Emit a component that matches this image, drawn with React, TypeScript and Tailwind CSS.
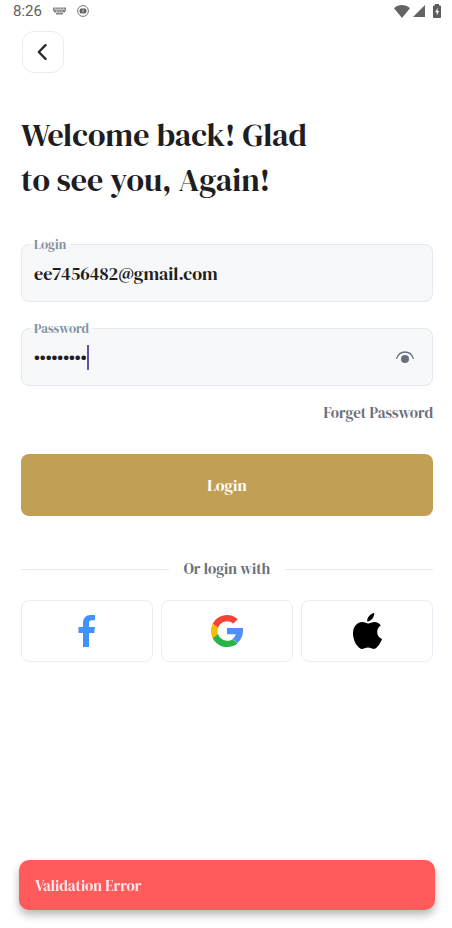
import { useState } from "react";
import type { ReactNode } from "react";

function KeyboardIcon() {
  return (
    <svg viewBox="0 0 13 8" className="h-2 w-[13px]" fill="#858585" aria-hidden="true">
      <path d="M0 .5h13v3.800h-1v1.200H1V4.300H0zM3 6h7v1.500H3z" />
      <path d="M2.300.5v1.500M4.900.5v1.500M7.600.5v1.500M10.300.5v1.500M3.500 3v2.500M6.300 3v2.500M9 3v2.500M1 2.500h11" stroke="#fff" strokeWidth=".5" />
    </svg>
  );
}

function RecordIcon() {
  return (
    <svg viewBox="0 0 12 12" className="size-3" fill="none" aria-hidden="true">
      <circle cx="6" cy="6" r="5.4" stroke="#777" strokeWidth="1" />
      <rect x="2.6" y="3.6" width="6.8" height="4.8" rx="1.6" fill="#5f5f5f" />
      <path d="M6 4.6v2.8" stroke="#ddd" strokeWidth="1" />
    </svg>
  );
}

function StatusBar() {
  return (
    <div className="flex h-[22px] items-center justify-between pr-[11px] pl-[13px] text-[#5f5f5f]">
      <div className="flex items-center">
        <span className="w-10 font-[Roboto,sans-serif] text-[15px] leading-[22px]">8:26</span>
        <KeyboardIcon />
        <span className="w-[11px]" />
        <RecordIcon />
      </div>
      <div className="flex h-5 items-center">
        <svg viewBox="0 0 16 13" className="h-[13px] w-4" fill="#646464" aria-hidden="true">
          <path d="M0 3.2C4.6-1 11.400-1 16 3.200L8 13z" />
        </svg>
        <span className="w-[3px]" />
        <svg viewBox="0 0 12 12" className="size-3" fill="#646464" aria-hidden="true">
          <path d="M12 0v12H0z" />
        </svg>
        <span className="w-2" />
        <svg viewBox="0 0 8 14" className="h-[14px] w-2" aria-hidden="true">
          <path fill="#5c5c5c" d="M2 0h4v1.500h1a1 1 0 0 1 1 1V13a1 1 0 0 1-1 1H1a1 1 0 0 1-1-1V2.500a1 1 0 0 1 1-1h1z" />
          <path fill="#fff" d="M4.600 3.800 2.200 8.200h1.600v3.200l2.300-4.500H4.600z" />
        </svg>
      </div>
    </div>
  );
}

function EyeIcon() {
  return (
    <svg viewBox="0 0 20 14" className="h-[14px] w-5" fill="none" aria-hidden="true">
      <path d="M1.500 8.800C3 4.300 6 2 10 2s7 2.300 8.500 6.800" stroke="#6a707c" strokeWidth="1.300" />
      <circle cx="10" cy="9" r="4" fill="#6a707c" />
    </svg>
  );
}

function FacebookIcon() {
  return (
    <svg viewBox="0 0 18 32" className="h-8 w-[18px]" fill="#4092ff" aria-hidden="true">
      <path d="M5 32V18H.5v-6H5V8.500C5 3 8 0 12.500 0H17v5.200h-2.800C12 5.200 11 6.200 11 8.200V12h6l-.8 6H11v14z" />
    </svg>
  );
}

function GoogleIcon() {
  return (
    <svg viewBox="0 0 48 48" className="size-8" aria-hidden="true">
      <path fill="#f44336" d="M24 9.500c3.540 0 6.710 1.220 9.210 3.600l6.850-6.850C35.900 2.380 30.470 0 24 0 14.620 0 6.510 5.380 2.560 13.220l7.980 6.190C12.430 13.720 17.740 9.500 24 9.500z" />
      <path fill="#518ef8" d="M47.800 19.600H24v9.100h12.940c-.58 2.960-2.260 5.480-4.780 7.180l7.730 6c4.510-4.180 8.110-10.360 8.110-17.880 0-1.500-.05-3-.2-4.400z" />
      <path fill="#fbbb00" d="M10.530 28.590c-.48-1.450-.76-2.990-.76-4.590s.27-3.140.76-4.590l-7.980-6.190C.92 16.460 0 20.120 0 24c0 3.880.92 7.540 2.560 10.780z" />
      <path fill="#28b446" d="M24 48c6.480 0 11.930-2.130 15.890-5.810l-7.730-6c-2.150 1.450-4.920 2.300-8.160 2.300-6.260 0-11.570-4.220-13.470-9.910l-7.980 6.190C6.510 42.620 14.620 48 24 48z" />
    </svg>
  );
}

function AppleIcon() {
  return (
    <svg viewBox="0 0 29 36" className="h-9 w-[29px]" fill="#000" aria-hidden="true">
      <path d="M21.200 0c.3 4-3 8.300-7 8.600C13.800 4.500 17.200.6 21.200 0z" />
      <path d="M27.800 12.500c-5.200 3.200-4.800 11 1.200 13.600-1.300 3.800-4.300 8.300-6.700 9.500-2.800 1-4.600-1-7.300-1-2.700 0-4.500 2-7.200 1.100C3.500 33.500.2 27.500 0 20.800-.2 13.500 4.200 9 9.300 9c2.500 0 4.200 1.500 5.900 1.500 1.700 0 3.500-1.600 6.600-1.600 2.300 0 4.600 1.400 6 3.600z" />
    </svg>
  );
}

interface FieldProps {
  id: string;
  label: string;
  children: ReactNode;
}

function Field({ id, label, children }: FieldProps) {
  return (
    <fieldset className="h-[68px] min-w-0 rounded-lg border border-[#e3e8f1] bg-[#f7f8fa] px-2">
      <legend className="px-1 pt-0.5 text-[13px] leading-[18px] text-[#8391a1]">
        <label htmlFor={id}>{label}</label>
      </legend>
      {children}
    </fieldset>
  );
}

function SocialButton({ label, children }: { label: string; children: ReactNode }) {
  return (
    <button
      type="button"
      aria-label={label}
      className="flex h-[62px] items-center justify-center rounded-lg border border-[#e8ecf4] bg-white"
    >
      {children}
    </button>
  );
}

export default function App() {
  const [login, setLogin] = useState("ee7456482@gmail.com");
  const [password, setPassword] = useState("secret123");
  const [visible, setVisible] = useState(false);

  return (
    <div className="min-h-screen bg-white font-['DM_Serif_Display','Liberation_Serif',serif] text-[#1e1e22]">
      <StatusBar />
      <main className="pr-[19px] pl-[21px]">
        <button
          type="button"
          aria-label="Back"
          className="mt-[9px] ml-px flex size-[42px] items-center justify-center rounded-xl border border-[#e8ecf4]"
        >
          <svg viewBox="0 0 10 16" className="mr-0.5 h-4 w-[10px]" fill="none" aria-hidden="true">
            <path d="M8.500 1.200 1.800 8l6.700 6.800" stroke="#2b2b2b" strokeWidth="2.400" strokeLinecap="round" strokeLinejoin="round" />
          </svg>
        </button>

        <h1 className="mt-10 max-w-[330px] text-[32px] leading-[45px]">
          Welcome back! Glad
          <br />
          to see you, Again!
        </h1>

        <form onSubmit={(event) => event.preventDefault()}>
          <div className="mt-[31px] flex flex-col gap-4">
            <Field id="login" label="Login">
              <input
                id="login"
                type="text"
                value={login}
                onChange={(event) => setLogin(event.target.value)}
                className="block h-[38px] w-full px-1 text-[18px] outline-none"
              />
            </Field>
            <Field id="password" label="Password">
              <div className="relative flex items-center">
                <input
                  id="password"
                  type={visible ? "text" : "password"}
                  value={password}
                  onChange={(event) => setPassword(event.target.value)}
                  className="block h-[38px] min-w-0 flex-1 px-1 text-[18px] caret-[#6750a4] outline-none"
                />
                <span className="absolute top-[7px] left-[57px] h-[25px] w-0.5 bg-[#6750a4]" />
                <button
                  type="button"
                  aria-label="Show password"
                  onClick={() => setVisible(!visible)}
                  className="mr-[9px] flex h-[38px] items-center"
                >
                  <EyeIcon />
                </button>
              </div>
            </Field>
          </div>

          <div className="mt-4 flex justify-end">
            <a href="#forgot" className="text-[15px] leading-[22px] text-[#6a707c]">
              Forget Password
            </a>
          </div>

          <button
            type="submit"
            className="mt-[30px] h-[62px] w-full rounded-lg bg-[#c1a055] text-[16px] text-white"
          >
            Login
          </button>
        </form>

        <div className="mt-[42px] flex items-center gap-[15px]">
          <span className="h-px flex-1 bg-[#e3e8f4]" />
          <span className="text-[15px] leading-[22px] text-[#6a707c]">Or login with</span>
          <span className="h-px flex-1 bg-[#e3e8f4]" />
        </div>

        <div className="mt-5 grid grid-cols-3 gap-2">
          <SocialButton label="Log in with Facebook">
            <FacebookIcon />
          </SocialButton>
          <SocialButton label="Log in with Google">
            <GoogleIcon />
          </SocialButton>
          <SocialButton label="Log in with Apple">
            <AppleIcon />
          </SocialButton>
        </div>
      </main>

      <div
        role="alert"
        className="fixed right-[17px] bottom-[18px] left-[19px] rounded-[10px] bg-[#ff5b5b] px-4 pt-[15px] pb-[13px] text-[15px] leading-[22px] text-[#ffe9ed] shadow-[0_5px_8px_rgba(0,0,0,0.28)]"
      >
        Validation Error
      </div>
    </div>
  );
}
